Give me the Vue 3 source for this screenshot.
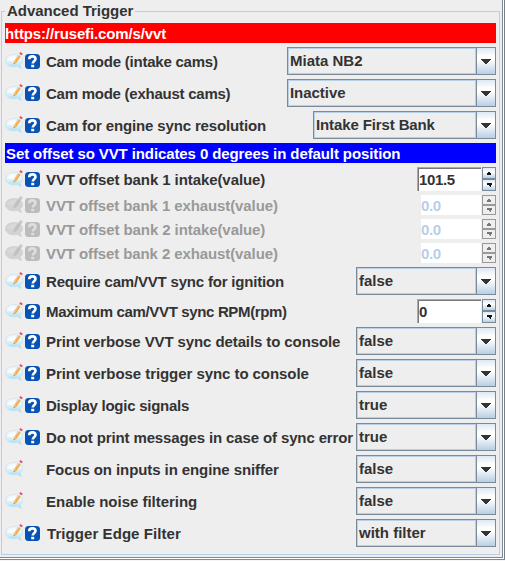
<script setup>
// track / valueTrack: letter spacing in px for the label and the value
const rows = [
  { type: 'note', tone: 'red', label: 'https://rusefi.com/s/vvt', track: -0.13 },
  { type: 'combo', label: 'Cam mode (intake cams)', track: -0.23, value: 'Miata NB2', size: 'wide', help: true },
  { type: 'combo', label: 'Cam mode (exhaust cams)', track: -0.25, value: 'Inactive', valueTrack: -0.05, size: 'wide', help: true },
  { type: 'combo', label: 'Cam for engine sync resolution', track: -0.14, value: 'Intake First Bank', valueTrack: -0.12, size: 'medium', help: true },
  { type: 'note', tone: 'blue', label: 'Set offset so VVT indicates 0 degrees in default position', track: -0.1 },
  { type: 'spin', label: 'VVT offset bank 1 intake(value)', track: -0.08, value: '101.5', valueTrack: -0.35, help: true },
  { type: 'spin', label: 'VVT offset bank 1 exhaust(value)', track: -0.1, value: '0.0', valueTrack: -0.35, help: true, disabled: true },
  { type: 'spin', label: 'VVT offset bank 2 intake(value)', track: -0.08, value: '0.0', valueTrack: -0.35, help: true, disabled: true },
  { type: 'spin', label: 'VVT offset bank 2 exhaust(value)', track: -0.1, value: '0.0', valueTrack: -0.35, help: true, disabled: true },
  { type: 'combo', label: 'Require cam/VVT sync for ignition', track: -0.19, value: 'false', help: true },
  { type: 'spin', label: 'Maximum cam/VVT sync RPM(rpm)', track: -0.35, value: '0', help: true },
  { type: 'combo', label: 'Print verbose VVT sync details to console', track: -0.1, value: 'false', help: true },
  { type: 'combo', label: 'Print verbose trigger sync to console', track: -0.06, value: 'false', help: true },
  { type: 'combo', label: 'Display logic signals', track: -0.25, value: 'true', help: true },
  { type: 'combo', label: 'Do not print messages in case of sync error', track: -0.13, value: 'true', help: true },
  { type: 'combo', label: 'Focus on inputs in engine sniffer', track: -0.09, value: 'false' },
  { type: 'combo', label: 'Enable noise filtering', track: -0.02, value: 'false' },
  { type: 'combo', label: 'Trigger Edge Filter', track: 0.07, value: 'with filter', help: true },
]
const spacing = (px) => ({ letterSpacing: `${px || 0}px` })
</script>

<template>
  <div class="window">
    <main class="pane">
      <fieldset class="group">
        <legend class="title">Advanced Trigger</legend>
        <div class="rows">
          <template v-for="row in rows" :key="row.label">
            <div v-if="row.type === 'note'" class="note" :class="row.tone" :style="spacing(row.track)">{{ row.label }}</div>
            <div v-else class="row" :class="[row.type, { disabled: row.disabled }]">
              <div class="icons">
                <svg class="edit" width="18" height="18" viewBox="0 0 18 18">
                  <defs>
                    <linearGradient id="bubble" x1="0" y1="0" x2="0" y2="1">
                      <stop offset="0" stop-color="#eef7fc" />
                      <stop offset=".45" stop-color="#e2f2fa" />
                      <stop offset="1" stop-color="#a2e0f7" />
                    </linearGradient>
                  </defs>
                  <path class="bubble" d="M8.800 2.500C4 2.500.500 5.200.500 8.700c0 3.500 3.500 6.100 8.300 6.100 1.300 0 2.500-.2 3.600-.6 1.200 1.300 2.600 2 4.100 2.200-.8-1-1.200-2.200-1.200-3.500 1.500-1.100 2.300-2.600 2.300-4.200 0-3.500-4-6.200-8.800-6.200z" />
                  <path class="shine" d="M2.500 8.600C3 5.600 5.400 4.200 8.800 4.200L11 5.500 7.500 9.500z" />
                  <path class="wood" d="M8.600 12.400l.3-3L13.100 3l2.600 1.600-4.400 6.400z" />
                  <path class="grain" d="M10.400 11l4.600-6.800" />
                  <path class="lead" d="M8.600 12.500l.1-1.600 1.200.7z" />
                  <path class="metal" d="M13.200 3l.8-1.300 2.600 1.700-.8 1.300z" />
                  <path class="rubber" d="M14.300 1.700L15.400.1l2.400 1.600-1.100 1.600z" />
                </svg>
                <svg v-if="row.help" class="help" width="15" height="15" viewBox="0 0 15 15">
                  <rect class="plate" width="15" height="15" rx="3.500" />
                  <path class="mark" d="M4.200 5.200C4.200 3 5.700 2.400 7.400 2.400c1.900 0 3.100.9 3.100 2.600 0 2-2.700 2-2.700 4.600" />
                  <rect class="dot" x="6.200" y="10.800" width="3" height="2.500" />
                </svg>
              </div>
              <span class="label" :class="{ nudge: row.label.startsWith('Trigger') }" :style="spacing(row.track)">{{ row.label }}</span>
              <div v-if="row.type === 'combo'" class="select" :class="row.size">
                <span class="value" :style="spacing(row.valueTrack)">{{ row.value }}</span>
                <span class="drop">
                  <svg width="10" height="5" viewBox="0 0 10 5" shape-rendering="crispEdges">
                    <path d="M0 0h10v1H9v1H8v1H7v1H6v1H4V4H3V3H2V2H1V1H0z" />
                  </svg>
                </span>
              </div>
              <div v-else class="spinner">
                <span class="field" :style="spacing(row.valueTrack)">{{ row.value }}</span>
                <span class="steps">
                  <span class="step">
                    <svg width="4" height="3" viewBox="0 0 4 3" shape-rendering="crispEdges"><path d="M1 0h2v1h1v2H0V1h1z" /></svg>
                  </span>
                  <span class="step">
                    <svg width="5" height="4" viewBox="0 0 5 4" shape-rendering="crispEdges"><path d="M0 0h5v2H4v2H3V3H2V2H0z" /></svg>
                  </span>
                </span>
              </div>
            </div>
          </template>
        </div>
      </fieldset>
    </main>
  </div>
</template>

<style>
body { background: #eee; }
</style>

<style scoped>
.window {
  width: 505px;
  height: 561px;
  overflow: hidden;
  background: #f6f6f6;
  font: bold 15px/20px "Liberation Sans", Arial, sans-serif;
  color: #333;
  white-space: nowrap;
}
.pane {
  box-sizing: border-box;
  width: 505px;
  height: 560px;
  background: #eee;
  border-right: 1px solid #7a7f86;
  border-bottom: 1px solid #7a8a99;
  box-shadow: inset -1px -1px #fff, inset -2px -2px #7a8a99;
  padding: 1px 3px 0 1px;
}
.group {
  box-sizing: border-box;
  width: 499px;
  height: 554px;
  margin: 0;
  padding: 0 3px;
  border: 1px solid #b8cfe5;
}
.title {
  height: 20px;
  margin-left: 0;
  padding: 0 2px 0 2px;
  letter-spacing: -0.02px;
}
.rows {
  display: flex;
  flex-direction: column;
  gap: 4px;
  margin-top: 2px;
  width: 491px;
}
.note { height: 20px; color: #fff; line-height: 21px; }
.red { background: #f00; }
.blue { background: #00f; padding-left: 1px; }
.row { display: flex; align-items: center; height: 28px; }
.row.spin { height: 24px; }
.row.spin.disabled { height: 20px; color: #999; }
.icons { display: flex; flex: none; align-items: center; gap: 2px; width: 41px; height: 19px; }
.icons svg { display: block; flex: none; }
.help { margin-top: 1px; }
.edit { margin-top: -1px; }
.label { flex: 1; min-width: 0; padding-top: 1px; }
.nudge { padding-left: 1px; }
.bubble { fill: url(#bubble); stroke: #c3dfeb; stroke-width: .6; }
.shine { fill: #f9fcfe; }
.wood { fill: #f9be6c; }
.grain { fill: none; stroke: #e39a48; stroke-width: .9; }
.lead { fill: #777; }
.metal { fill: #dfe6ea; }
.rubber { fill: #df4f5a; }
.plate { fill: #0753b5; }
.mark { fill: none; stroke: #fff; stroke-width: 2.6; }
.dot { fill: #fff; }
.disabled .bubble { fill: #d3d3d3; stroke: #cbcbcb; }
.disabled .shine { fill: #d9d9d9; }
.disabled .wood, .disabled .lead, .disabled .metal, .disabled .rubber { fill: #c2c2c2; }
.disabled .grain { stroke: #b9b9b9; }
.disabled .plate { fill: #bcbcbc; }
.disabled .mark { stroke: #dedede; }
.disabled .dot { fill: #dedede; }
.select {
  box-sizing: border-box;
  display: flex;
  flex: none;
  width: 140px;
  height: 28px;
  border: 1px solid #7a8a99;
}
.select.wide { width: 209px; }
.select.medium { width: 183px; }
.value {
  flex: 1;
  box-sizing: border-box;
  border: 1px solid #b8cfe5;
  padding-left: 1px;
  line-height: 24px;
}
.drop {
  box-sizing: border-box;
  width: 19px;
  display: flex;
  align-items: center;
  justify-content: center;
  border-left: 1px solid #7a8a99;
  background: linear-gradient(#dde8f3 0%, #fff 32%, #fff 45%, #b8cfe5 100%);
  fill: #333;
}
.drop svg { margin-top: 1px; }
.spinner { display: flex; flex: none; gap: 1px; width: 79px; height: 24px; }
.field {
  box-sizing: border-box;
  width: 64px;
  background: #fff;
  border-top: 1px solid #aaa;
  border-left: 1px solid #aaa;
  box-shadow: inset 1px 1px #777;
  padding-left: 1px;
  line-height: 24px;
}
.steps { display: flex; flex-direction: column; width: 14px; }
.step {
  box-sizing: border-box;
  display: flex;
  align-items: center;
  justify-content: center;
  height: 12px;
  border: 1px solid #7a8a99;
  background: linear-gradient(#dde8f3, #fff 40%, #b8cfe5);
  fill: #111;
}
.disabled .spinner { width: 75px; height: 20px; }
.disabled .field { width: 60px; border: 0; box-shadow: none; color: #b8cfe5; line-height: 21px; padding-left: 0; }
.disabled .step { height: 10px; background: #eee; border-color: #999; fill: #777; }
</style>
